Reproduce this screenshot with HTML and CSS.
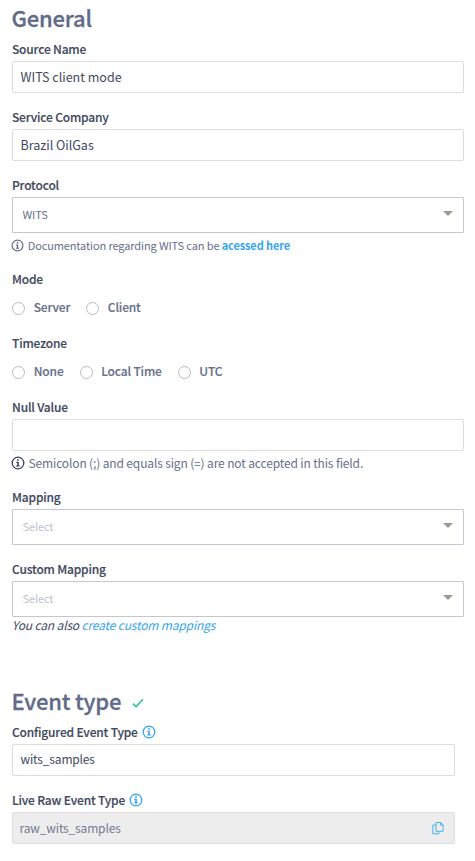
FILE: index.html
```html
<!DOCTYPE html>
<html lang="en">
<head>
<meta charset="utf-8">
<title>Source settings</title>
<link rel="stylesheet" href="styles.css">
</head>
<body>
<svg class="defs" width="0" height="0">
  <symbol id="info" viewBox="0 0 14 14">
    <circle cx="7" cy="7" r="5.8" fill="none" stroke="currentColor" stroke-width="1.3"/>
    <path d="M6.1 3.2h1.7v1.6H6.1zM5.3 5.8h2.5v3.5h.9v1.1H5.3V9.3h.9V6.9h-.9z" fill="currentColor"/>
  </symbol>
</svg>
<form>
  <section class="general">
    <h2><span>General</span></h2>
    <div class="field">
      <div class="label"><span>Source Name</span></div>
      <div class="input"><span>WITS client mode</span></div>
    </div>
    <div class="field">
      <div class="label"><span>Service Company</span></div>
      <div class="input"><span>Brazil OilGas</span></div>
    </div>
    <div class="field protocol">
      <div class="label"><span>Protocol</span></div>
      <div class="select"><span>WITS</span><i class="caret"></i></div>
      <div class="hint small"><svg class="icon"><use href="#info"/></svg><span>Documentation regarding WITS can be <a class="strong">acessed here</a></span></div>
    </div>
    <div class="field choices">
      <div class="label"><span>Mode</span></div>
      <div class="radios"><label><i class="radio"></i><span>Server</span></label><label><i class="radio"></i><span>Client</span></label></div>
    </div>
    <div class="field choices">
      <div class="label"><span>Timezone</span></div>
      <div class="radios"><label><i class="radio"></i><span>None</span></label><label><i class="radio"></i><span>Local Time</span></label><label><i class="radio"></i><span>UTC</span></label></div>
    </div>
    <div class="field null-value">
      <div class="label"><span>Null Value</span></div>
      <div class="input"></div>
      <div class="hint"><svg class="icon dark"><use href="#info"/></svg><span>Semicolon (;) and equals sign (=) are not accepted in this field.</span></div>
    </div>
    <div class="field">
      <div class="label"><span>Mapping</span></div>
      <div class="select empty"><span>Select</span><i class="caret"></i></div>
    </div>
    <div class="field">
      <div class="label"><span>Custom Mapping</span></div>
      <div class="select empty"><span>Select</span><i class="caret"></i></div>
      <div class="note"><span>You can also <a>create custom mappings</a></span></div>
    </div>
  </section>
  <section class="events">
    <h2><span>Event type</span><svg class="check" viewBox="0 0 12 10"><path d="M1 5.6 4.1 8.6 11 1.3" fill="none" stroke="#29c490" stroke-width="1.5"/></svg></h2>
    <div class="field">
      <div class="label"><span>Configured Event Type</span><svg class="icon"><use href="#info"/></svg></div>
      <div class="input"><span>wits_samples</span></div>
    </div>
    <div class="field">
      <div class="label"><span>Live Raw Event Type</span><svg class="icon"><use href="#info"/></svg></div>
      <div class="input disabled"><span>raw_wits_samples</span>
        <svg class="copy" viewBox="0 0 12 13"><path d="M4 .5h4.8L11.1 3v6.3H4zM8.5 .7v2.5h2.5M4 3H.8v8.8h6V9.5" fill="none" stroke="#4ab2f0"/></svg>
      </div>
    </div>
  </section>
</form>
</body>
</html>
```

FILE: styles.css
```css
* { box-sizing: border-box; }
body {
  margin: 0;
  background: #fff;
  color: #414960;
  font: 12.5px/24px "Noto Sans CJK SC", "Noto Sans", sans-serif;
  white-space: nowrap;
}
.defs { position: absolute; }
form { padding: 0 11px 0 12px; }
h2 {
  display: flex;
  align-items: center;
  height: 36px;
  margin: 0;
  padding-bottom: 4px;
  font-size: 22px;
  font-weight: 500;
  letter-spacing: -0.2px;
  color: #5f6b88;
  -webkit-text-stroke: 0.3px;
}
h2 span { margin-left: -0.5px; }
.field { margin-bottom: 12px; }
.label {
  display: flex;
  align-items: center;
  height: 24px;
  font-size: 12px;
  font-weight: 500;
  letter-spacing: -0.18px;
  -webkit-text-stroke: 0.15px;
}
.general { padding-top: 1px; }
.input, .select {
  display: flex;
  align-items: center;
  justify-content: space-between;
  border: 1px solid #dddde0;
  border-radius: 2px;
}
.input { height: 32px; padding: 0 7.5px; }
.select {
  height: 36px;
  padding: 0 10px 0 9.5px;
  border-color: #c3c7d2;
  border-radius: 1px;
  font-size: 11px;
  letter-spacing: -0.1px;
  color: #66708a;
}
.select span { padding-bottom: 2px; }
.empty { color: #bcc1ce; }
.caret {
  border: 5px solid transparent;
  border-top-color: #999;
  border-bottom: 0;
  margin-top: -4px;
}
.hint {
  display: flex;
  align-items: center;
  gap: 3.5px;
  height: 26px;
  padding-bottom: 2px;
  font-size: 12px;
  letter-spacing: -0.14px;
  color: #66708a;
}
.small { gap: 3.7px; font-size: 11px; letter-spacing: -0.12px; }
.icon { width: 14px; height: 14px; margin-left: -1px; }
.small .icon { width: 13px; height: 13px; }
.dark { color: #3d4663; }
.protocol { margin-bottom: 8px; }
.choices { margin-bottom: 11px; }
.radios {
  display: flex;
  gap: 16px;
  height: 29px;
  padding-top: 5px;
  font-size: 12px;
  font-weight: 500;
  letter-spacing: -0.16px;
  color: #66708a;
  -webkit-text-stroke: 0.15px;
}
.radios label { display: flex; align-items: center; gap: 8.7px; }
.radios span { padding-bottom: 2px; }
.radio {
  width: 13px;
  height: 13px;
  border: 1px solid #b5bac9;
  border-radius: 50%;
}
.null-value { margin-bottom: 8px; }
a { color: #36a5ef; }
.strong { font-weight: 700; }
.note {
  height: 20px;
  line-height: 16px;
  font-size: 12px;
  font-style: italic;
  letter-spacing: -0.16px;
}
.events { padding: 35px 9px 0 0; }
.events .input { font-size: 12px; letter-spacing: -0.16px; }
.events .input span { padding-bottom: 2px; }
.check { width: 12px; height: 10px; margin: 5px 0 0 10.5px; }
.label .icon { margin-left: 4px; color: #36a5ef; }
.events .disabled { padding: 0 10px 0 6.5px; background: #ededed; color: #707a92; }
.events .disabled span { padding-bottom: 0; }
.copy { width: 12px; height: 13px; }
```
